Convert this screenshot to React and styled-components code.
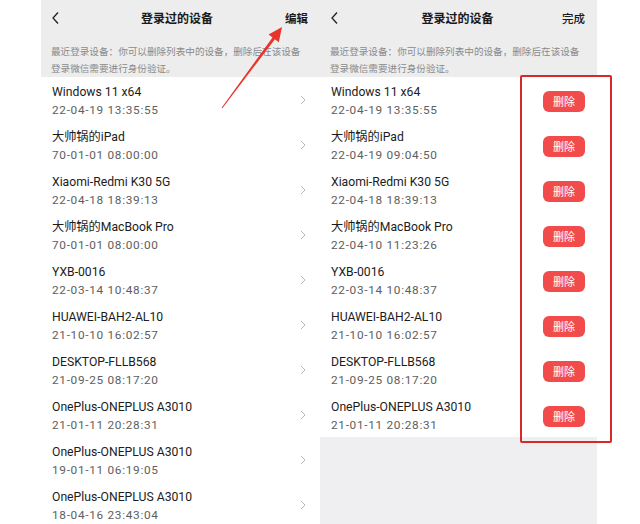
import React from "react";
import styled, { createGlobalStyle } from "styled-components";

const GlobalStyle = createGlobalStyle`
  html, body {
    margin: 0;
    padding: 0;
    background: #ffffff;
  }
  body {
    font-family: Roboto, "Noto Sans CJK SC", sans-serif;
  }
`;

const devicesLeft = [
  ["Windows 11 x64", "22-04-19 13:35:55"],
  ["大帅锅的iPad", "70-01-01 08:00:00"],
  ["Xiaomi-Redmi K30 5G", "22-04-18 18:39:13"],
  ["大帅锅的MacBook Pro", "70-01-01 08:00:00"],
  ["YXB-0016", "22-03-14 10:48:37"],
  ["HUAWEI-BAH2-AL10", "21-10-10 16:02:57"],
  ["DESKTOP-FLLB568", "21-09-25 08:17:20"],
  ["OnePlus-ONEPLUS A3010", "21-01-11 20:28:31"],
  ["OnePlus-ONEPLUS A3010", "19-01-11 06:19:05"],
  ["OnePlus-ONEPLUS A3010", "18-04-16 23:43:04"],
];

const devicesRight = [
  ["Windows 11 x64", "22-04-19 13:35:55"],
  ["大帅锅的iPad", "22-04-19 09:04:50"],
  ["Xiaomi-Redmi K30 5G", "22-04-18 18:39:13"],
  ["大帅锅的MacBook Pro", "22-04-10 11:23:26"],
  ["YXB-0016", "22-03-14 10:48:37"],
  ["HUAWEI-BAH2-AL10", "21-10-10 16:02:57"],
  ["DESKTOP-FLLB568", "21-09-25 08:17:20"],
  ["OnePlus-ONEPLUS A3010", "21-01-11 20:28:31"],
];

const Page = styled.div`
  position: relative;
  width: 640px;
  height: 524px;
  overflow: hidden;
  display: flex;
  padding-left: 41px;
  box-sizing: border-box;
`;

const Phone = styled.div`
  width: ${(p) => p.$width}px;
  height: 524px;
  display: flex;
  flex-direction: column;
  background: ${(p) => (p.$fill ? "#efeff1" : "#ffffff")};
`;

const Header = styled.div`
  background: #ededee;
  height: 77px;
  display: flex;
  flex-direction: column;
`;

const NavBar = styled.div`
  height: 35px;
  display: grid;
  grid-template-columns: 40px 1fr 40px;
  align-items: center;
  padding: 0 12px 0 10px;
`;

const Back = styled.div`
  display: flex;
  align-items: center;
`;

const Title = styled.div`
  text-align: center;
  font-size: 12px;
  font-weight: 700;
  color: #1a1a1a;
  padding-right: ${(p) => p.$shift}px;
`;

const Action = styled.div`
  text-align: right;
  font-size: 11.5px;
  font-weight: ${(p) => (p.$bold ? 700 : 500)};
  color: #1a1a1a;
`;

const Note = styled.div`
  padding: 8px 12px 0 10px;
  font-size: 9.6px;
  line-height: 17px;
  color: #8a8a8a;
  white-space: nowrap;
`;

const List = styled.div`
  background: #ffffff;
  display: flex;
  flex-direction: column;
`;

const Row = styled.div`
  height: 45px;
  box-sizing: border-box;
  padding: 6px 12px 0 11px;
  display: flex;
  justify-content: space-between;
  align-items: center;
`;

const Info = styled.div`
  display: flex;
  flex-direction: column;
  align-self: flex-start;
`;

const Name = styled.div`
  font-size: 12.2px;
  line-height: 18px;
  color: #1c1c1c;
  white-space: nowrap;
`;

const Time = styled.div`
  font-size: 11.8px;
  line-height: 18px;
  color: #5e5e5e;
  letter-spacing: 0.7px;
  white-space: nowrap;
`;

const Chevron = styled.svg`
  margin-top: -5px;
  margin-right: 2px;
`;

const DeleteButton = styled.button`
  width: 42px;
  height: 21px;
  margin-top: -3px;
  border: none;
  border-radius: 6px;
  background: #f24b4b;
  color: #ffffff;
  font-family: Roboto, "Noto Sans CJK SC", sans-serif;
  font-size: 11px;
  padding: 0;
`;

const Highlight = styled.div`
  position: absolute;
  left: 520px;
  top: 75px;
  width: 92px;
  height: 368px;
  box-sizing: border-box;
  border: 2px solid #d8292a;
  border-radius: 2px;
`;

const Arrow = styled.svg`
  position: absolute;
  left: 0;
  top: 0;
  pointer-events: none;
`;

const BackIcon = () => (
  <svg width="10" height="14" viewBox="0 0 10 14">
    <polyline
      points="7,1.5 2,7 7,12.5"
      fill="none"
      stroke="#222"
      strokeWidth="1.3"
    />
  </svg>
);

const Panel = ({ width, action, bold, items, editing, shift }) => (
  <Phone $width={width} $fill={editing}>
    <Header>
      <NavBar>
        <Back>
          <BackIcon />
        </Back>
        <Title $shift={shift}>登录过的设备</Title>
        <Action $bold={bold}>{action}</Action>
      </NavBar>
      <Note>
        最近登录设备：你可以删除列表中的设备，删除后在该设备
        <br />
        登录微信需要进行身份验证。
      </Note>
    </Header>
    <List>
      {items.map(([name, time], i) => (
        <Row key={i}>
          <Info>
            <Name>{name}</Name>
            <Time>{time}</Time>
          </Info>
          {editing ? (
            <DeleteButton>删除</DeleteButton>
          ) : (
            <Chevron width="6" height="10" viewBox="0 0 6 10">
              <polyline
                points="1,1 5,5 1,9"
                fill="none"
                stroke="#b8b8b8"
                strokeWidth="1"
              />
            </Chevron>
          )}
        </Row>
      ))}
    </List>
  </Phone>
);

export default function App() {
  return (
    <>
      <GlobalStyle />
      <Page>
        <Panel width={279} action="编辑" bold shift={5} items={devicesLeft} />
        <Panel
          width={277}
          action="完成"
          shift={0}
          items={devicesRight}
          editing
        />
        <Highlight />
        <Arrow width="640" height="524" viewBox="0 0 640 524">
          <polygon
            points="222.4,108.3 274.9,39.2 278.8,42.2 282,27 268.6,34.5 272.5,37.4 221.6,107.7"
            fill="#e8342a"
          />
        </Arrow>
      </Page>
    </>
  );
}
